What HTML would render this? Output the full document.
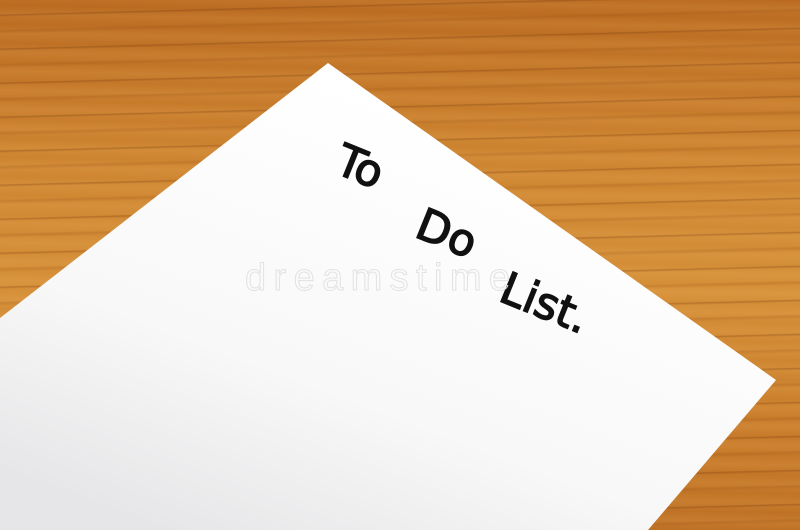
<!DOCTYPE html>
<html><head><style>
html,body{margin:0;padding:0;width:800px;height:530px;overflow:hidden}
.wood{position:absolute;inset:0;background:
repeating-linear-gradient(178.5deg,rgba(90,40,5,0) 0px,rgba(90,40,5,0) 14px,rgba(110,50,10,.3) 15px,rgba(90,40,5,0) 17px,rgba(90,40,5,0) 29px,rgba(140,70,15,.2) 31px,rgba(90,40,5,0) 34px),
repeating-linear-gradient(181deg,rgba(255,200,120,0) 0px,rgba(255,200,120,.12) 9px,rgba(255,200,120,0) 19px),
linear-gradient(180deg,#b96a20 0%,#cd8430 30%,#d58f38 55%,#c87c2a 80%,#bd7024 100%);}
svg{position:absolute;left:0;top:0}
</style></head><body>
<div class="wood"></div>
<svg width="800" height="530" viewBox="0 0 800 530">
<defs>
<linearGradient id="p" x1="0.7" y1="0.2" x2="0.2" y2="1">
<stop offset="0" stop-color="#ffffff"/><stop offset="0.6" stop-color="#f8f8f8"/><stop offset="1" stop-color="#e6e6e8"/>
</linearGradient>
</defs>
<polygon points="328,63 776,380 648,530 0,530 0,318" fill="url(#p)"/>
<g font-family="'DejaVu Sans',sans-serif" fill="#111" stroke="#111" stroke-width="1.5" font-size="44">
<text transform="translate(333,172) rotate(22)">To</text>
<text transform="translate(413,236) rotate(22)">Do</text>
<text transform="translate(497,300) rotate(22)">List.</text>
</g>
<text x="245" y="290" font-family="'Liberation Sans',sans-serif" font-size="38" textLength="265" fill="none" stroke="#e2e2e2" stroke-width="1">dreamstime</text>
</svg>
</body></html>
